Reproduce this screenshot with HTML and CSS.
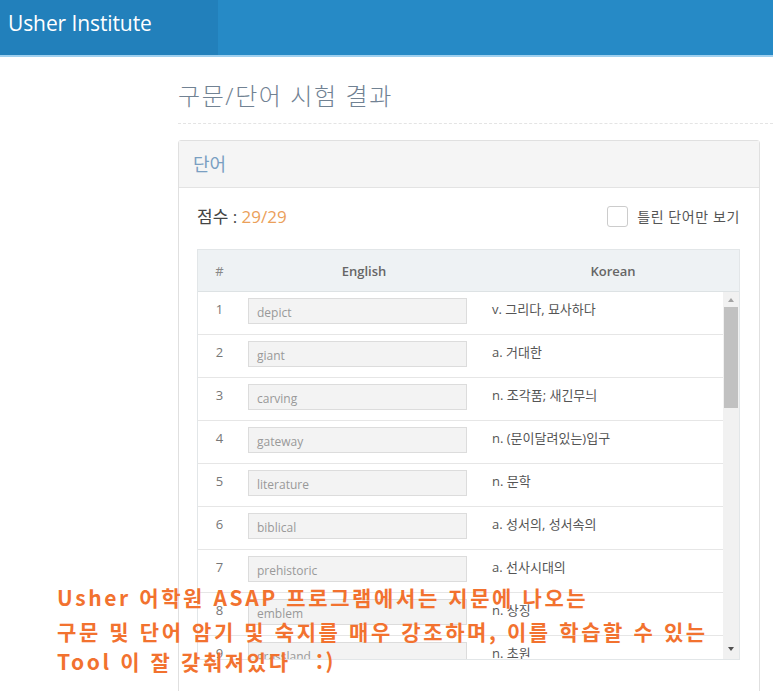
FILE: index.html
```html
<!DOCTYPE html>
<html lang="ko">
<head>
<meta charset="utf-8">
<title>Usher Institute</title>
<link rel="stylesheet" href="styles.css">
</head>
<body>
<header class="topbar">
  <div class="brand">Usher Institute</div>
</header>
<main class="main">
  <h1 class="page-title">구문/단어 시험 결과</h1>
  <section class="panel">
    <div class="panel-head">단어</div>
    <div class="panel-body">
      <div class="score-row">
        <div class="score">점수 : <span class="score-val">29/29</span></div>
        <label class="filter"><span class="check"></span>틀린 단어만 보기</label>
      </div>
      <div class="table">
        <div class="thead">
          <div class="c-num">#</div>
          <div class="c-en">English</div>
          <div class="c-ko">Korean</div>
        </div>
        <div class="tbody-wrap">
          <div class="tbody">
            <div class="row"><div class="c-num">1</div><div class="c-en"><div class="inp">depict</div></div><div class="c-ko">v. 그리다, 묘사하다</div></div>
            <div class="row"><div class="c-num">2</div><div class="c-en"><div class="inp">giant</div></div><div class="c-ko">a. 거대한</div></div>
            <div class="row"><div class="c-num">3</div><div class="c-en"><div class="inp">carving</div></div><div class="c-ko">n. 조각품; 새긴무늬</div></div>
            <div class="row"><div class="c-num">4</div><div class="c-en"><div class="inp">gateway</div></div><div class="c-ko">n. (문이달려있는)입구</div></div>
            <div class="row"><div class="c-num">5</div><div class="c-en"><div class="inp">literature</div></div><div class="c-ko">n. 문학</div></div>
            <div class="row"><div class="c-num">6</div><div class="c-en"><div class="inp">biblical</div></div><div class="c-ko">a. 성서의, 성서속의</div></div>
            <div class="row"><div class="c-num">7</div><div class="c-en"><div class="inp">prehistoric</div></div><div class="c-ko">a. 선사시대의</div></div>
            <div class="row"><div class="c-num">8</div><div class="c-en"><div class="inp">emblem</div></div><div class="c-ko">n. 상징</div></div>
            <div class="row"><div class="c-num">9</div><div class="c-en"><div class="inp">grassland</div></div><div class="c-ko">n. 초원</div></div>
          </div>
          <div class="scrollbar">
            <span class="arrow up"></span>
            <span class="thumb"></span>
            <span class="arrow down"></span>
          </div>
        </div>
      </div>
    </div>
  </section>
</main>
<div class="caption">
  <p>Usher 어학원 ASAP 프로그램에서는 지문에 나오는</p>
  <p>구문 및 단어 암기 및 숙지를 매우 강조하며, 이를 학습할 수 있는</p>
  <p>Tool 이 잘 갖춰져있다&nbsp;&nbsp;&nbsp;:)</p>
</div>
</body>
</html>
```
FILE: styles.css
```css
* { box-sizing: border-box; }
html, body { margin: 0; padding: 0; }
body {
  font-family: "Open Sans", "Noto Sans CJK KR", sans-serif;
  background: #fff;
  color: #555;
  height: 691px;
  overflow: hidden;
  position: relative;
}
.topbar {
  height: 57px;
  background: #268ac6;
  border-bottom: 2px solid #9fd0ef;
  display: flex;
}
.brand {
  width: 218px;
  background: #2280bb;
  color: #fff;
  font-size: 21px;
  padding: 9px 0 0 8px;
  letter-spacing: -0.1px;
}
.main {
  margin-left: 178px;
  width: 582px;
}
.page-title {
  margin: 22px 0 0 0;
  padding-bottom: 11px;
  font-size: 24px;
  font-weight: 300;
  color: #718293;
  letter-spacing: 1.6px;
  border-bottom: 1px dashed #e4e4e4;
  width: 595px;
  line-height: 33px;
}
.panel {
  margin-top: 16px;
  border: 1px solid #e0e0e0;
  border-radius: 3px 3px 0 0;
  height: 560px;
}
.panel-head {
  height: 47px;
  background: #f5f5f5;
  border-bottom: 1px solid #e3e3e3;
  color: #7a9fc2;
  font-size: 18px;
  padding: 9px 0 0 14px;
}
.panel-body {
  padding: 15px 19px 0 18px;
}
.score-row {
  display: flex;
  justify-content: space-between;
  align-items: center;
  height: 24px;
}
.score {
  font-size: 17px;
  color: #444;
}
.score-val { color: #eba05a; }
.filter {
  display: flex;
  align-items: center;
  font-size: 14px;
  color: #555;
  letter-spacing: 0.6px;
  margin-top: 2px;
}
.check {
  width: 21px;
  height: 21px;
  border: 1px solid #ccc;
  border-radius: 3px;
  background: #fff;
  margin-right: 9px;
}
.table {
  margin-top: 22px;
  border: 1px solid #e2e6e8;
  border-bottom: none;
}
.thead {
  display: flex;
  height: 42px;
  background: #eef2f4;
  border-bottom: 1px solid #dde2e4;
  align-items: center;
  font-size: 13px;
  font-weight: 600;
  color: #666;
}
.thead .c-num { width: 43px; text-align: center; color: #888; font-weight: 400; }
.thead .c-en { width: 246px; text-align: center; }
.thead .c-ko { flex: 1; text-align: center; }
.tbody-wrap {
  display: flex;
  height: 368px;
  overflow: hidden;
  border-bottom: 1px solid #e2e6e8;
}
.tbody { flex: 1; }
.row {
  display: flex;
  height: 43px;
  border-bottom: 1px solid #e6e6e6;
  align-items: flex-start;
  padding-top: 6px;
}
.row .c-num {
  width: 43px;
  text-align: center;
  font-size: 13px;
  color: #777;
  padding-top: 2px;
}
.row .c-en {
  width: 244px;
  padding-left: 7px;
}
.inp {
  width: 219px;
  height: 26px;
  background: #f3f3f3;
  border: 1px solid #dcdcdc;
  font-size: 12px;
  color: #999;
  padding: 5px 0 0 8px;
}
.row .c-ko {
  flex: 1;
  font-size: 13px;
  color: #555;
  padding: 1px 0 0 7px;
}
.scrollbar {
  width: 16px;
  background: #f1f1f1;
  display: flex;
  flex-direction: column;
  align-items: center;
}
.arrow {
  width: 0;
  height: 0;
  border-left: 3px solid transparent;
  border-right: 3px solid transparent;
}
.arrow.up { border-bottom: 4px solid #a3a3a3; margin-top: 6px; }
.arrow.down { border-top: 4px solid #505050; margin-top: auto; margin-bottom: 8px; }
.thumb {
  width: 14px;
  height: 101px;
  background: #c1c1c1;
  margin-top: 5px;
}
.caption {
  position: absolute;
  left: 57px;
  top: 580px;
  color: #f2722f;
  font-family: "Noto Sans CJK KR", "Noto Sans", sans-serif;
  font-weight: 700;
  font-size: 21px;
  letter-spacing: 2.6px;
}
.caption p {
  margin: 0;
  line-height: 34px;
  height: 34px;
}
.caption p:last-child { margin-top: -4px; }
```
